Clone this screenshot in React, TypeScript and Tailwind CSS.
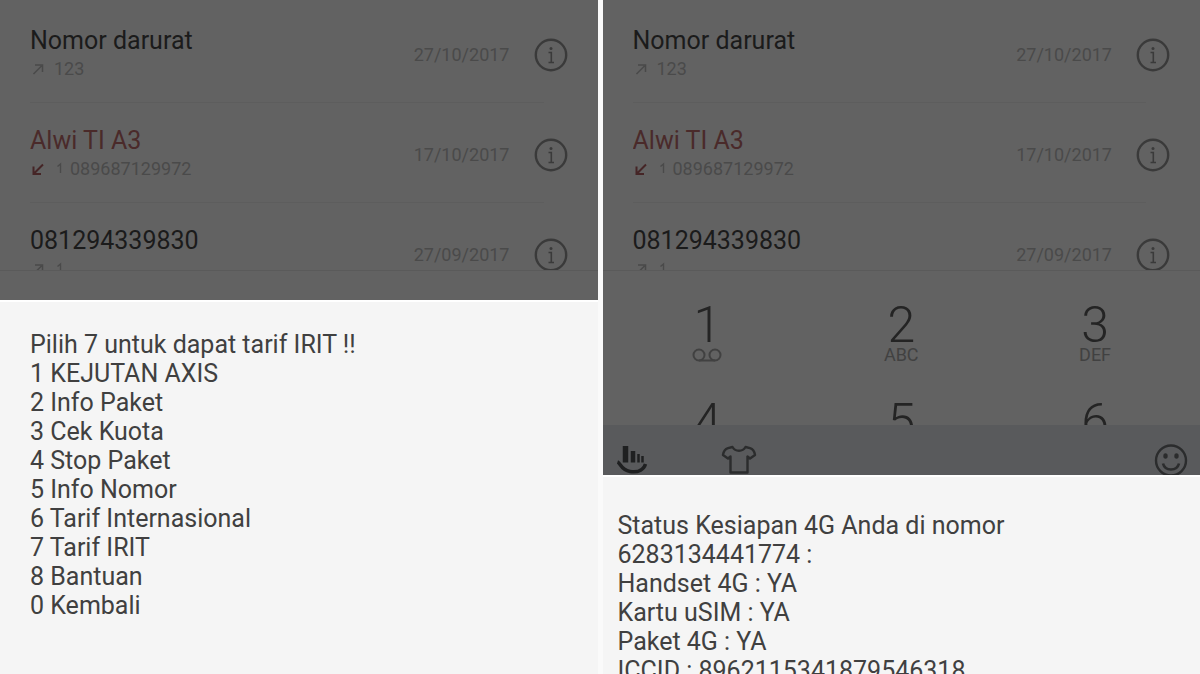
import React from "react";
import clsx from "clsx";

type Call = {
  name: string;
  detail: string;
  date: string;
  sim?: boolean;
  missed?: boolean;
};

const calls: Call[] = [
  { name: "Nomor darurat", detail: "123", date: "27/10/2017" },
  { name: "Alwi TI A3", detail: "089687129972", date: "17/10/2017", sim: true, missed: true },
  { name: "081294339830", detail: "", date: "27/09/2017", sim: true },
];

const keys = [
  { digit: "1", label: <VoicemailIcon /> },
  { digit: "2", label: "ABC" },
  { digit: "3", label: "DEF" },
  { digit: "4" },
  { digit: "5" },
  { digit: "6" },
];

const menuLines = [
  "Pilih 7 untuk dapat tarif IRIT !!",
  "1 KEJUTAN AXIS",
  "2 Info Paket",
  "3 Cek Kuota",
  "4 Stop Paket",
  "5 Info Nomor",
  "6 Tarif Internasional",
  "7 Tarif IRIT",
  "8 Bantuan",
  "0 Kembali",
];

const statusLines = [
  "Status Kesiapan 4G Anda di nomor",
  "6283134441774 :",
  "Handset 4G : YA",
  "Kartu uSIM : YA",
  "Paket 4G : YA",
  "ICCID : 8962115341879546318",
];

function InfoIcon() {
  return (
    <svg viewBox="0 0 34 34" className="size-[34px]" fill="none" stroke="currentColor">
      <circle cx="17" cy="17" r="15.2" strokeWidth="2.4" />
      <circle cx="17" cy="10.5" r="1.5" fill="currentColor" stroke="none" />
      <path d="M14.5 14.5H17.3V24.5M14.5 24.5H20" strokeWidth="1.6" />
    </svg>
  );
}

function CallArrow({ missed }: { missed?: boolean }) {
  return (
    <svg viewBox="0 0 16 16" className={clsx("size-4", missed ? "text-[#452526]" : "text-[#494949]")} fill="none" stroke="currentColor">
      {missed ? (
        <path d="M13 3.5L4 12.5M3.5 5.5V13H11" strokeWidth="2" />
      ) : (
        <path d="M3.5 13L11.5 5M5 4H12.5V11" strokeWidth="1.5" />
      )}
    </svg>
  );
}

function SimMark() {
  return (
    <svg viewBox="0 0 10 16" className="h-4 w-3" fill="none" stroke="currentColor" strokeWidth="1.4">
      <path d="M2.5 5.5L5.5 3V12" />
    </svg>
  );
}

function VoicemailIcon() {
  return (
    <svg viewBox="0 0 32 16" className="h-4 w-8" fill="none" stroke="currentColor" strokeWidth="2">
      <circle cx="8" cy="8" r="5.5" />
      <circle cx="24" cy="8" r="5.5" />
      <path d="M8 13.5H24" />
    </svg>
  );
}

function HandIcon() {
  return (
    <svg viewBox="0 0 34 32" className="h-8 w-[34px]" fill="none" stroke="currentColor">
      <path d="M10.500 2V18.500" strokeWidth="5.500" />
      <path d="M18 7V18.500" strokeWidth="4.500" />
      <path d="M23.500 10V18.500" strokeWidth="2.500" />
      <path d="M27.500 12V18.500" strokeWidth="2.500" />
      <path d="M2.500 18C5.500 19 6 26 15 27.500C24 29 29 25 30.500 20" strokeWidth="3.500" />
    </svg>
  );
}

function ShirtIcon() {
  return (
    <svg viewBox="0 0 36 32" className="h-8 w-9" fill="none" stroke="currentColor" strokeWidth="2.400" strokeLinejoin="round">
      <path d="M11.5 3C14.5 8 21.5 8 24.5 3L29 4.2C31.5 5 33.5 7.500 34 11L29 14.500L26.500 12.500V28.500H9.500V12.500L7 14.500L2 11C2.500 7.500 4.500 5 7 4.200Z" />
    </svg>
  );
}

function SmileIcon() {
  return (
    <svg viewBox="0 0 34 34" className="size-[34px]" fill="none" stroke="currentColor">
      <circle cx="17" cy="16.500" r="15" strokeWidth="2.400" />
      <ellipse cx="11.500" cy="12" rx="2.200" ry="2.800" fill="currentColor" stroke="none" />
      <ellipse cx="22.500" cy="12" rx="2.200" ry="2.800" fill="currentColor" stroke="none" />
      <path d="M9 19.500C11 27.500 23 27.500 25 19.500" strokeWidth="2.600" />
    </svg>
  );
}

function CallList() {
  return (
    <ul className="h-[271px] overflow-hidden border-b border-[#5a5a5a] pt-[3px]">
      {calls.map((call) => (
        <li key={call.name} className="px-[30px]">
          <div className="flex h-[99px] items-center">
            <div className="min-w-0 flex-1">
              <p className={clsx("truncate text-[25px] leading-8", call.missed ? "text-[#4a2a2a]" : "text-[#1b1b1b]")}>{call.name}</p>
              <p className="flex h-6 items-center gap-2 text-[18px] leading-6 text-[#4a4a4a]">
                <CallArrow missed={call.missed} />
                <span className="flex items-center gap-1">
                  {call.sim && <SimMark />}
                  {call.detail}
                </span>
              </p>
            </div>
            <div className="flex items-center gap-6 pt-1">
              <time className="text-[18px] leading-6 text-[#4a4a4a]">{call.date}</time>
              <button type="button" aria-label={`Info ${call.name}`} className="text-[#3a3a3a]">
                <InfoIcon />
              </button>
            </div>
          </div>
          <div className="mr-6 h-px bg-[#5d5d5d]" />
        </li>
      ))}
    </ul>
  );
}

function Keypad() {
  return (
    <div className="grid h-[154px] grid-cols-3 overflow-hidden pl-2 pr-2 pt-8">
      {keys.map((key) => (
        <button key={key.digit} type="button" className="flex h-[97px] flex-col items-center text-[#242424]">
          <span className="text-[50px] font-light leading-[44px]">{key.digit}</span>
          <span className="flex h-4 items-center text-[18px] leading-4 text-[#414141]">{key.label}</span>
        </button>
      ))}
    </div>
  );
}

function KeyboardBar() {
  return (
    <div className="flex h-[50px] items-start overflow-hidden bg-[#595a5c] px-3 pt-[19px] text-[#1f2021]">
      <button type="button" aria-label="Input">
        <HandIcon />
      </button>
      <button type="button" aria-label="Tema" className="ml-[72px] text-[#2b2c2d]">
        <ShirtIcon />
      </button>
      <button type="button" aria-label="Emoji" className="ml-auto text-[#2b2c2d]">
        <SmileIcon />
      </button>
    </div>
  );
}

function Message({ lines, className }: { lines: string[]; className?: string }) {
  return (
    <section className={clsx("flex-1 border-t-2 border-white bg-[#f5f5f5] text-[25px] leading-[29px] text-[#404040]", className)}>
      {lines.map((line) => (
        <p key={line}>{line}</p>
      ))}
    </section>
  );
}

export default function App() {
  return (
    <main className="grid h-screen grid-cols-2 gap-[5px] overflow-hidden bg-[#fafafa] font-[Roboto,sans-serif]">
      <div className="flex min-w-0 flex-col">
        <div className="bg-[#626262] pb-[29px]">
          <CallList />
        </div>
        <Message lines={menuLines} className="px-[30px] pt-7" />
      </div>
      <div className="flex min-w-0 flex-col">
        <div className="bg-[#626262]">
          <CallList />
          <Keypad />
          <KeyboardBar />
        </div>
        <Message lines={statusLines} className="px-[15px] pt-[34px]" />
      </div>
    </main>
  );
}
